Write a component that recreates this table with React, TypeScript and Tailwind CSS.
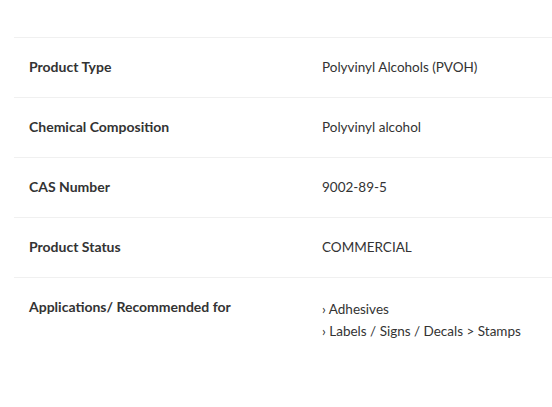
const rows: { label: string; value: string[] }[] = [
  { label: "Product Type", value: ["Polyvinyl Alcohols (PVOH)"] },
  { label: "Chemical Composition", value: ["Polyvinyl alcohol"] },
  { label: "CAS Number", value: ["9002-89-5"] },
  { label: "Product Status", value: ["COMMERCIAL"] },
  { label: "Applications/ Recommended for", value: ["› Adhesives", "› Labels / Signs / Decals > Stamps"] },
];

export default function App() {
  return (
    <div className="h-[407px] w-[552px] overflow-hidden bg-white pt-[37px] pl-[14px] font-['Lato','Open_Sans',sans-serif] text-[14px] leading-[22px] text-[#333]">
      <div className="border-t border-[#f0f0f0]">
        {rows.map((row, i) => {
          const isList = row.value.length > 1;
          return (
            <div
              key={row.label}
              className={`flex ${i < rows.length - 1 ? "h-[60px] items-center border-b border-[#f0f0f0] pb-[2px]" : "items-start pt-[18px]"}`}
            >
              <div className="w-[293px] shrink-0 pl-[15px] font-bold">{row.label}</div>
              <div className={`pl-[15px] text-[13.5px] ${isList ? "mt-[2px]" : ""}`}>
                {row.value.map((v) => (
                  <div key={v}>{v}</div>
                ))}
              </div>
            </div>
          );
        })}
      </div>
    </div>
  );
}
